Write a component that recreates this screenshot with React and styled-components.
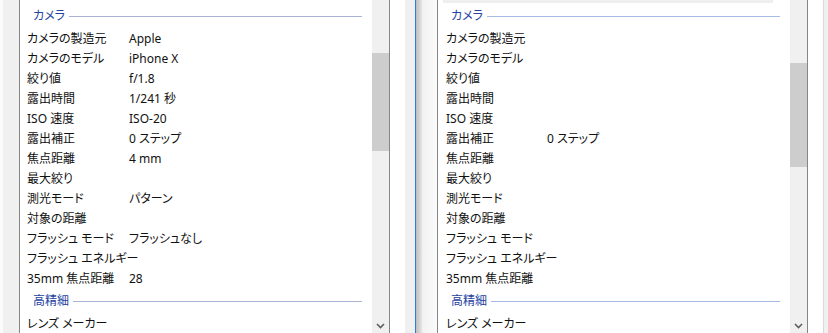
import React from 'react';
import styled, {createGlobalStyle} from 'styled-components';

const GlobalStyle = createGlobalStyle`
    html, body {
        margin: 0;
        padding: 0;
        background: #f0f0f0;
    }
`;

const Page = styled.div`
    display: flex;
    width: 828px;
    height: 333px;
    overflow: hidden;
    background: #f0f0f0;
    font-family: "Noto Sans", "Noto Sans CJK JP", sans-serif;
    font-size: 12px;
    font-feature-settings: "palt";
    color: #111;
`;

const LeftWindow = styled.div`
    display: flex;
    width: 405px;
    flex-shrink: 0;
    padding-left: 3px;
    box-sizing: border-box;
    background: #fbfbfb;
`;

const Gutter = styled.div`
    width: 16px;
    flex-shrink: 0;
    background: #f0f0f0;
`;

const WhiteMargin = styled.div`
    width: ${p => p.w}px;
    flex-shrink: 0;
    background: #fff;
`;

const Seam = styled.div`
    width: 10px;
    flex-shrink: 0;
    background: #f0f0f0;
`;

const RightWindow = styled.div`
    display: flex;
    flex: 1;
    border-left: 1px solid #2a7fd4;
`;

const Shadow = styled.div`
    width: 6px;
    flex-shrink: 0;
    background: linear-gradient(to right, #bdbdbd, #e6e6e6);
`;

const Frame = styled.div`
    width: 15px;
    flex-shrink: 0;
    background: linear-gradient(to right, #f1f1f1, #fbfbfb);
`;

const EdgeLine = styled.div`
    width: 1px;
    flex-shrink: 0;
    background: #d9d9d9;
`;

const ListBox = styled.div`
    display: flex;
    width: 371px;
    flex-shrink: 0;
    box-sizing: border-box;
    border-left: 1px solid #868686;
    border-right: 1px solid #868686;
    background: #fff;
`;

const Content = styled.div`
    display: flex;
    flex-direction: column;
    flex: 1;
    padding-top: ${p => p.top}px;
`;

const TopBar = styled.div`
    height: 3px;
    margin: 0 17px 2px 5px;
    background: #efefef;
`;

const SectionHeader = styled.div`
    display: flex;
    align-items: center;
    height: 22px;
    line-height: 22px;
    margin-top: ${p => p.gap || 0}px;
    padding-left: 13px;
    padding-right: 10px;
    color: #2542a0;
    gap: 4px;

    &::after {
        content: "";
        flex: 1;
        height: 1px;
        margin-top: 1px;
        background: ${p => p.line};
    }
`;

const Row = styled.div`
    display: flex;
    height: 20px;
    line-height: 24px;
    padding-left: ${p => p.indent}px;
    white-space: nowrap;
`;

const Label = styled.span`
    width: ${p => p.w}px;
    flex-shrink: 0;
`;

const Value = styled.span``;

const ScrollBar = styled.div`
    display: flex;
    flex-direction: column;
    width: 17px;
    flex-shrink: 0;
    background: #f0f0f0;
`;

const Thumb = styled.div`
    margin-top: ${p => p.top}px;
    height: ${p => p.h}px;
    background: #cdcdcd;
`;

const ArrowButton = styled.div`
    margin-top: auto;
    height: 14px;
    display: flex;
    align-items: center;
    justify-content: center;
`;

const labels = [
    'カメラの製造元', 'カメラのモデル', '絞り値', '露出時間', 'ISO 速度', '露出補正',
    '焦点距離', '最大絞り', '測光モード', '対象の距離', 'フラッシュ モード',
    'フラッシュ エネルギー', '35mm 焦点距離',
];

const leftValues = {
    'カメラの製造元': 'Apple',
    'カメラのモデル': 'iPhone X',
    '絞り値': 'f/1.8',
    '露出時間': '1/241 秒',
    'ISO 速度': 'ISO-20',
    '露出補正': '0 ステップ',
    '焦点距離': '4 mm',
    '測光モード': 'パターン',
    'フラッシュ モード': 'フラッシュなし',
    '35mm 焦点距離': '28',
};

const rightValues = {
    '露出補正': '0 ステップ',
};

function Chevron() {
    return (
        <svg width="9" height="6" viewBox="0 0 9 6">
            <polyline points="1,1 4.5,4.5 8,1" fill="none" stroke="#5f5f5f" strokeWidth="1.6"/>
        </svg>
    );
}

function PropertyList({values, indent, labelWidth, line, topBar, thumbTop, thumbHeight}) {
    return (
        <ListBox>
            <Content top={topBar ? 0 : 5}>
                {topBar && <TopBar/>}
                <SectionHeader line={line}>カメラ</SectionHeader>
                {labels.map(l => (
                    <Row key={l} indent={indent}>
                        <Label w={labelWidth}>{l}</Label>
                        <Value>{values[l] || ''}</Value>
                    </Row>
                ))}
                <SectionHeader line={line} gap={3}>高精細</SectionHeader>
                <Row indent={indent}>
                    <Label w={labelWidth}>レンズ メーカー</Label>
                </Row>
            </Content>
            <ScrollBar>
                <Thumb top={thumbTop} h={thumbHeight}/>
                <ArrowButton><Chevron/></ArrowButton>
            </ScrollBar>
        </ListBox>
    );
}

export default function App() {
    return (
        <>
            <GlobalStyle/>
            <Page>
                <LeftWindow>
                    <Gutter/>
                    <PropertyList values={leftValues} indent={7} labelWidth={102} line="#aab3d3"
                                  thumbTop={53} thumbHeight={98}/>
                    <WhiteMargin w={16}/>
                </LeftWindow>
                <Seam/>
                <RightWindow>
                    <Shadow/>
                    <Frame/>
                    <PropertyList values={rightValues} indent={8} labelWidth={101} line="#a5bbe4" topBar
                                  thumbTop={63} thumbHeight={104}/>
                    <WhiteMargin w={15}/>
                    <EdgeLine/>
                </RightWindow>
            </Page>
        </>
    );
}
